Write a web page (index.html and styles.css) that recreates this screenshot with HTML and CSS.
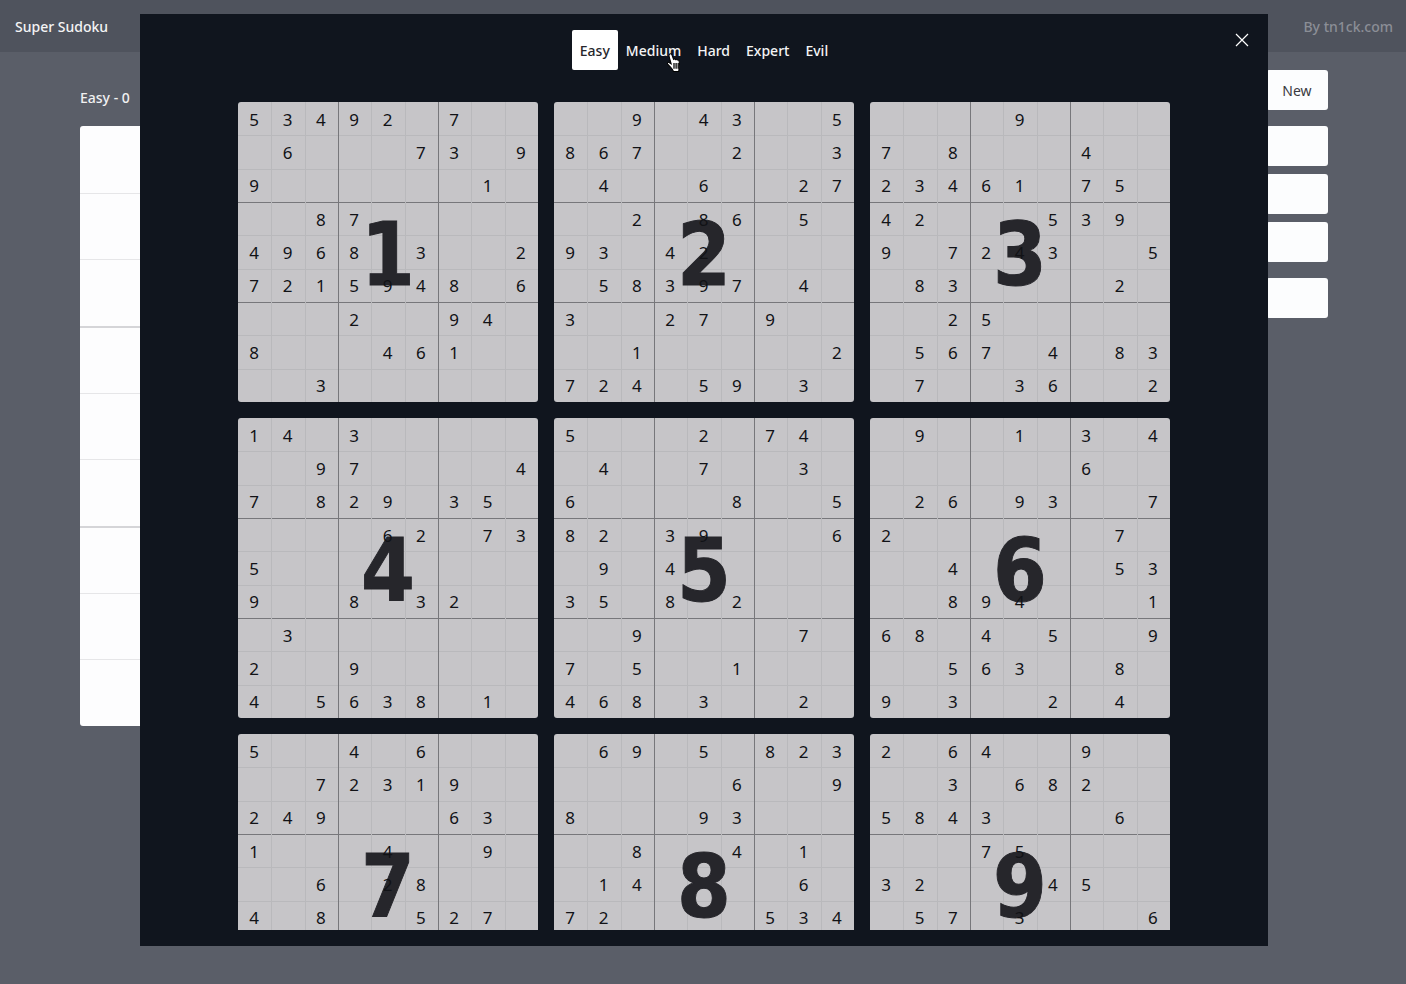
FILE: index.html
```html
<!DOCTYPE html>
<html lang="en">
<head>
    <meta charset="UTF-8">
    <title>Super Sudoku</title>
    <link rel="stylesheet" href="styles.css">
</head>
<body>

<header class="topbar">
    <span class="logo">Super Sudoku</span>
    <span class="credit">By tn1ck.com</span>
</header>

<main class="game">
    <section class="play-area">
        <div class="game-title">Easy - 0</div>
        <div class="main-board">
            <div></div><div></div><div></div><div></div><div></div><div></div><div></div><div></div><div></div>
        </div>
    </section>
    <aside class="side">
        <button class="side-btn">New</button>
        <div class="side-stack">
            <button class="side-btn"></button>
            <button class="side-btn"></button>
            <button class="side-btn"></button>
        </div>
        <button class="side-btn"></button>
    </aside>
</main>

<div class="modal">
    <nav class="tabs">
        <a class="tab active">Easy</a>
        <a class="tab">Medium</a>
        <a class="tab">Hard</a>
        <a class="tab">Expert</a>
        <a class="tab">Evil</a>
    </nav>
    <button class="close" aria-label="Close">
        <svg width="14" height="14" viewBox="0 0 14 14"><path d="M1 1 L13 13 M13 1 L1 13" stroke="#fff" stroke-width="1.2" fill="none"/></svg>
    </button>
    <div class="boards" id="boards"></div>
</div>

<svg class="cursor" width="16" height="20" viewBox="0 0 14 19">
    <path d="M2.500 1.500c.5-1 2-1 2.500.2l1.500 4.300c.5-.6 1.500-.5 1.800.2.5-.5 1.500-.4 1.800.4.600-.3 1.500 0 1.700.8.600 2.300.6 4.500.1 6.500l-.4 3.600H6.500c-.4-1.400-1.300-2.400-2.400-3.600L1 10.500c-.7-.9.300-2 1.300-1.500l2 1.300-2-7c-.1-.6 0-1.300.2-1.800z" fill="#fff" stroke="#000" stroke-width="1"/>
    <path d="M7 9.500v5.500M9 9.500v5.500M11 9.500v5.500" stroke="#000" stroke-width="1.200" fill="none"/>
</svg>

<script>
    // puzzles shown in the picker, one string per row, "." is an empty cell
    const puzzles = [
        ["53492.7..", ".6...73.9", "9......1.", "..87.....", "4968.3..2", "7215948.6", "...2..94.", "8...461..", "..3......"],
        ["..9.43..5", "867..2..3", ".4..6..27", "..2.86.5.", "93.42....", ".58397.4.", "3..27.9..", "..1.....2", "724.59.3."],
        ["....9....", "7.8...4..", "23461.75.", "42...539.", "9.7243..5", ".83....2.", "..25.....", ".567.4.83", ".7..36..2"],
        ["14.3.....", "..97....4", "7.829.35.", "....62.73", "5........", "9..8.32..", ".3.......", "2..9.....", "4.5638.1."],
        ["5...2.74.", ".4..7..3.", "6....8..5", "82.39...6", ".9.4.....", "35.8.2...", "..9....7.", "7.5..1...", "468.3..2."],
        [".9..1.3.4", "......6..", ".26.93..7", "2......7.", "..4....53", "..894...1", "68.4.5..9", "..563..8.", "9.3..2.4."],
        ["5..4.6...", "..72319..", "249...63.", "1...4..9.", "..6.28...", "4.8..527.", ".........", ".........", "........."],
        [".69.5.823", ".....6..9", "8...93...", "..8..4.1.", ".14....6.", "72....534", ".........", ".........", "........."],
        ["2.64..9..", "..3.682..", "5843...6.", "...75....", "32...45..", ".57.3...6", ".........", ".........", "........."]
    ];

    const boards = document.getElementById('boards');

    puzzles.forEach(function(rows, index) {
        const puzzle = rows.join('');
        const board = document.createElement('div');
        board.className = 'board';

        for (let i = 0; i < 81; i++) {
            const cell = document.createElement('div');
            cell.className = 'cell';
            if (i % 9 === 3 || i % 9 === 6) cell.classList.add('box-left');
            if (i >= 27 && i < 36 || i >= 54 && i < 63) cell.classList.add('box-top');
            const value = puzzle[i];
            if (value !== '.') {
                const digit = document.createElement('span');
                digit.textContent = value;
                cell.appendChild(digit);
            }
            board.appendChild(cell);
        }

        const number = document.createElement('div');
        number.className = 'board-number';
        number.textContent = index + 1;
        board.appendChild(number);

        boards.appendChild(board);
    });
</script>
</body>
</html>
```

FILE: styles.css
```css
* {
    box-sizing: border-box;
}

body {
    margin: 0;
    height: 984px;
    overflow: hidden;
    background-color: #5a5e68;
    font-family: "Noto Sans", "Open Sans", sans-serif;
    color: #fff;
}

.topbar {
    display: flex;
    justify-content: space-between;
    align-items: center;
    height: 52px;
    padding: 1px 13px 0 15px;
    background-color: #4f535d;
}

.logo {
    font-size: 14px;
    font-weight: 500;
    color: #f4f4f5;
}

.credit {
    font-size: 14px;
    font-weight: 500;
    color: #8b8e96;
}

.game {
    display: flex;
    justify-content: space-between;
    padding: 0 78px 0 80px;
}

.game-title {
    height: 74px;
    padding-top: 36px;
    font-size: 14px;
    font-weight: 500;
    color: #f1f1f2;
}

.main-board {
    width: 600px;
    height: 600px;
    border-radius: 3px;
    overflow: hidden;
    background-color: #fdfdfe;
}

.main-board div {
    height: 66.66px;
    border-top: 1px solid #e6e6e8;
}

.main-board div:first-child {
    border-top: none;
}

.main-board div:nth-child(4),
.main-board div:nth-child(7) {
    border-top: 2px solid #d5d5d8;
}

.side {
    display: flex;
    flex-direction: column;
    gap: 16px;
    padding-top: 18px;
}

.side-stack {
    display: flex;
    flex-direction: column;
    gap: 8px;
}

.side-btn {
    display: block;
    width: 62px;
    height: 40px;
    padding: 0;
    border: none;
    border-radius: 3px;
    background-color: #fcfdfe;
    font-family: inherit;
    font-size: 14px;
    color: #3a3a3f;
}

.modal {
    position: fixed;
    top: 14px;
    left: 140px;
    width: 1128px;
    height: 932px;
    padding: 16px 0;
    background-color: #10151e;
}

.tabs {
    display: flex;
    justify-content: center;
    height: 40px;
}

.tab {
    display: flex;
    align-items: center;
    padding: 0 8px;
    border-radius: 2px;
    font-size: 14px;
    font-weight: 500;
    color: #f4f4f5;
}

.tab.active {
    background-color: #fff;
    color: #26262b;
}

.close {
    position: absolute;
    top: 19px;
    right: 19px;
    width: 14px;
    height: 14px;
    padding: 0;
    border: none;
    background: none;
    line-height: 0;
}

.boards {
    display: grid;
    grid-template-columns: repeat(3, 300px);
    justify-content: center;
    gap: 16px;
    height: 828px;
    margin-top: 32px;
    overflow: hidden;
}

.board {
    position: relative;
    display: grid;
    grid-template-columns: repeat(9, 1fr);
    grid-template-rows: repeat(9, 1fr);
    width: 300px;
    height: 300px;
    border-radius: 3px;
    overflow: hidden;
    background-color: #c6c5c8;
}

.cell {
    display: flex;
    align-items: center;
    justify-content: center;
    padding: 1px 1px 0 0;
    box-shadow: inset 1px 0 0 #b9b9bc, inset 0 1px 0 #b9b9bc;
    font-size: 17px;
    color: #111216;
}

.cell:nth-child(9n+1) {
    box-shadow: inset 0 1px 0 #b9b9bc;
}

.cell:nth-child(-n+9) {
    box-shadow: inset 1px 0 0 #b9b9bc;
}

.cell:first-child {
    box-shadow: none;
}

.cell.box-left {
    box-shadow: inset 1px 0 0 #77777b, inset 0 1px 0 #b9b9bc;
}

.cell.box-left:nth-child(-n+9) {
    box-shadow: inset 1px 0 0 #77777b;
}

.cell.box-top {
    box-shadow: inset 1px 0 0 #b9b9bc, inset 0 1px 0 #77777b;
}

.cell.box-top:nth-child(9n+1) {
    box-shadow: inset 0 1px 0 #77777b;
}

.cell.box-top.box-left {
    box-shadow: inset 1px 0 0 #77777b, inset 0 1px 0 #77777b;
}

.cell span {
    position: relative;
    z-index: 2;
}

.board-number {
    position: absolute;
    top: 6px;
    left: 0;
    right: 0;
    bottom: 0;
    z-index: 1;
    display: flex;
    align-items: center;
    justify-content: center;
    font-family: "DejaVu Sans", sans-serif;
    font-size: 88px;
    font-weight: 700;
    line-height: 1;
    color: #26262b;
    -webkit-text-stroke: 1px #26262b;
    transform: scaleX(0.88);
}

.cursor {
    position: fixed;
    top: 53px;
    left: 666px;
}
```
